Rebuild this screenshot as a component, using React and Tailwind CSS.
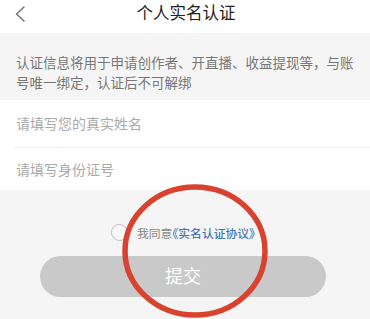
import React from "react";

export default function App() {
  const font = { fontFamily: '"Noto Sans CJK SC", "Noto Sans", sans-serif' };
  return (
    <div className="relative w-[370px] h-[319px] overflow-hidden bg-[#f5f5f5]" style={font}>
      <div className="relative h-[33px] bg-white flex items-center justify-center">
        <svg className="absolute left-[13px] top-[5px]" width="14" height="18" viewBox="0 0 14 18">
          <path d="M11 2 L3.5 9 L11 16" fill="none" stroke="#777" strokeWidth="1.6" strokeLinecap="round" strokeLinejoin="round" />
        </svg>
        <span className="text-[16.5px] text-[#222] leading-none -mt-[8px] ml-[2px]">个人实名认证</span>
      </div>
      <div className="pl-4 pr-[6px] pt-[20px] pb-[8px] text-[13.5px] leading-[19.5px] text-[#777]">
        认证信息将用于申请创作者、开直播、收益提现等，与账<br />号唯一绑定，认证后不可解绑
      </div>
      <div className="bg-white">
        <div className="h-[47px] flex items-center px-4 text-[14px] text-[#aaa]">请填写您的真实姓名</div>
        <div className="ml-[14px] h-px bg-[#eeeeee]" />
        <div className="h-[42px] flex items-center px-4 text-[14px] text-[#aaa]">请填写身份证号</div>
      </div>
      <div className="mt-[34px] flex items-center justify-center h-[17px] ml-[-4px] [font-feature-settings:'halt']">
        <div className="w-[17px] h-[17px] rounded-full border border-[#bbb] bg-white/40" />
        <span className="ml-[9px] text-[11.8px] text-[#888]">我同意</span>
        <span className="text-[11.8px] text-[#4678b8] font-medium">《实名认证协议》</span>
      </div>
      <div className="mt-[15px] mx-[40px] w-[286px] h-[41px] rounded-full bg-[#c9c9c9] flex items-center justify-center">
        <span className="text-[18px] text-white -mt-[2px]">提交</span>
      </div>
      <svg className="absolute left-0 top-0 pointer-events-none" width="370" height="319" viewBox="0 0 370 319">
        <ellipse cx="195" cy="251" rx="70" ry="64" fill="none" stroke="#d8432f" strokeWidth="5.5" />
      </svg>
    </div>
  );
}
